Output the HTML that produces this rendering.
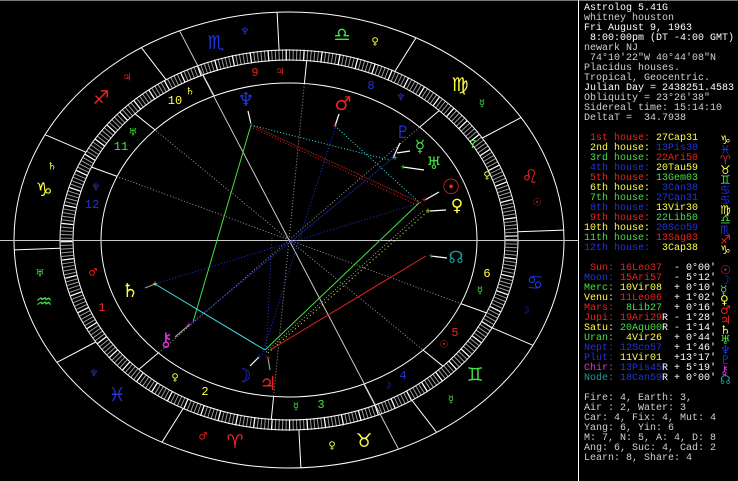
<!DOCTYPE html>
<html><head><meta charset="utf-8"><style>
html,body{margin:0;padding:0;background:#000;width:738px;height:481px;overflow:hidden}
svg{position:absolute;left:0;top:0}
.g{font-family:"DejaVu Sans",sans-serif;text-anchor:middle;dominant-baseline:central}
#p{position:absolute;left:584px;top:4px;font-family:"Liberation Mono",monospace;font-size:10px;line-height:10px;white-space:pre;color:#fff}
.w{color:#fff}.l{color:#d0d0d0}.r{color:#ee2222}.y{color:#ffff44}.gr{color:#44e044}.b{color:#2233dd}.m{color:#e030e0}.t{color:#209a9a}
.gl{position:absolute;font-family:"DejaVu Sans",sans-serif;font-size:12px;line-height:10px}
</style></head><body>
<svg width="738" height="481" viewBox="0 0 738 481">
<rect x="0" y="0" width="738" height="481" fill="#000"/>
<line x1="0" y1="0.5" x2="738" y2="0.5" stroke="#777"/>
<line x1="578.5" y1="0" x2="578.5" y2="481" stroke="#fff"/>
<!-- tick band -->
<ellipse cx="289" cy="240" rx="222.5" ry="185" fill="none" stroke="#9a9a9a" stroke-width="11.5" stroke-dasharray="1 2.55"/>
<ellipse cx="289" cy="240" rx="222.5" ry="185" fill="none" stroke="#fff" stroke-width="11.5" stroke-dasharray="1.2 16.55"/>
<g fill="none" stroke="#fff" stroke-width="1">
<ellipse cx="289" cy="240" rx="275" ry="228"/>
<ellipse cx="289" cy="240" rx="229" ry="190"/>
<ellipse cx="289" cy="240" rx="216" ry="180"/>
<ellipse cx="289" cy="240" rx="188" ry="157"/>
<line x1="158.3" y1="352.9" x2="138.9" y2="369.4"/>
<line x1="273.6" y1="396.5" x2="271.3" y2="419.4"/>
<line x1="423" y1="350" x2="443" y2="366.2"/>
<line x1="460.8" y1="303.6" x2="486.4" y2="312.9"/>
<line x1="419.7" y1="127.1" x2="439.1" y2="110.6"/>
<line x1="304.4" y1="83.5" x2="306.7" y2="60.6"/>
<line x1="155" y1="129.9" x2="135" y2="113.8"/>
<line x1="117.2" y1="176.4" x2="91.6" y2="167.1"/>
<line x1="363.8" y1="384" x2="375" y2="405.1"/>
<line x1="214.2" y1="96" x2="203" y2="74.9"/>
<line x1="183.2" y1="408.5" x2="162" y2="442.2"/>
<line x1="298.9" y1="429.8" x2="300.9" y2="467.8"/>
<line x1="412" y1="400.4" x2="436.7" y2="432.4"/>
<line x1="492.1" y1="327.8" x2="532.9" y2="345.3"/>
<line x1="517.8" y1="231.8" x2="563.7" y2="230.1"/>
<line x1="482.3" y1="138" x2="521.1" y2="117.6"/>
<line x1="394.8" y1="71.5" x2="416" y2="37.8"/>
<line x1="279.1" y1="50.2" x2="277.1" y2="12.2"/>
<line x1="166" y1="79.6" x2="141.3" y2="47.6"/>
<line x1="85.9" y1="152.2" x2="45.1" y2="134.7"/>
<line x1="60.2" y1="248.2" x2="14.3" y2="249.9"/>
<line x1="95.7" y1="342" x2="56.9" y2="362.4"/>
</g>
<line x1="0" y1="240.5" x2="578" y2="240.5" stroke="#c8c8c8"/>
<line x1="179.6" y1="31" x2="398.4" y2="449" stroke="#c8c8c8"/>
<g stroke="#999" stroke-dasharray="1 2">
<line x1="289" y1="240" x2="158.3" y2="352.9"/>
<line x1="289" y1="240" x2="273.6" y2="396.5"/>
<line x1="289" y1="240" x2="423" y2="350"/>
<line x1="289" y1="240" x2="460.8" y2="303.6"/>
<line x1="289" y1="240" x2="419.7" y2="127.1"/>
<line x1="289" y1="240" x2="304.4" y2="83.5"/>
<line x1="289" y1="240" x2="155" y2="129.9"/>
<line x1="289" y1="240" x2="117.2" y2="176.4"/>
</g>
<g stroke-width="1">
<line x1="251" y1="125" x2="421" y2="203" stroke="#dd2222" stroke-dasharray="1 1"/>
<line x1="253" y1="128" x2="419" y2="206" stroke="#dd2222" stroke-dasharray="1 2"/>
<line x1="251" y1="125" x2="389" y2="160" stroke="#40e0e0" stroke-dasharray="1 2"/>
<line x1="251" y1="125" x2="193" y2="322" stroke="#44e044"/>
<line x1="335" y1="126" x2="420" y2="203" stroke="#40e0e0" stroke-dasharray="1 2"/>
<line x1="335" y1="128" x2="262" y2="355" stroke="#2233dd" stroke-dasharray="1 2"/>
<line x1="393" y1="158" x2="189" y2="325" stroke="#2233dd" stroke-dasharray="1 1"/>
<line x1="155" y1="284" x2="419" y2="203" stroke="#2233dd" stroke-dasharray="1 2"/>
<line x1="155" y1="284" x2="265" y2="350" stroke="#40e0e0"/>
<line x1="265" y1="350" x2="419" y2="203" stroke="#44e044"/>
<line x1="266" y1="352" x2="424" y2="210" stroke="#44e044" stroke-dasharray="1 2"/>
<line x1="268" y1="353" x2="427" y2="212" stroke="#ffff44" stroke-dasharray="1 3"/>
<line x1="270" y1="350" x2="426" y2="256" stroke="#dd2222"/>
<line x1="266" y1="356" x2="272" y2="236" stroke="#2233dd" stroke-dasharray="1 2"/>
</g>
<g stroke="#fff" stroke-width="1.2">
<line x1="251" y1="124" x2="248" y2="111"/>
<line x1="335" y1="126" x2="339" y2="114"/>
<line x1="393" y1="158" x2="400" y2="143"/><line x1="397" y1="153" x2="410" y2="151"/>
<line x1="403" y1="167" x2="424" y2="170"/>
<line x1="425" y1="200" x2="439" y2="192"/>
<line x1="430" y1="211" x2="446" y2="210"/>
<line x1="431" y1="256" x2="447" y2="258"/>
<line x1="155" y1="284" x2="145" y2="288" stroke="#999"/>
<line x1="189" y1="325" x2="175" y2="337" stroke="#999"/>
<line x1="259" y1="357" x2="250" y2="366"/>
<line x1="268" y1="358" x2="270" y2="370" stroke="#999"/>
</g>
<g font-size="7" class="g">
<text x="251" y="124" fill="#2233dd">+</text>
<text x="335" y="126" fill="#ee2222">+</text>
<text x="393" y="158" fill="#2233dd">+</text>
<text x="395" y="158" fill="#44e044">+</text>
<text x="403" y="167" fill="#44e044">+</text>
<text x="424" y="200" fill="#ee2222">+</text>
<text x="428" y="211" fill="#ffff44">+</text>
<text x="431" y="256" fill="#209a9a">+</text>
<text x="155" y="284" fill="#ffff44">+</text>
<text x="189" y="325" fill="#e030e0">+</text>
<text x="259" y="357" fill="#2233dd">+</text>
<text x="268" y="358" fill="#ee2222">+</text>
</g>
<g class="g" font-size="19">
<text x="246" y="100" fill="#2233dd">♆</text>
<text x="343" y="104" fill="#ee2222">♂</text>
<text x="403" y="133" fill="#2233dd" font-size="17">♇</text>
<text x="420" y="147" fill="#44e044" font-size="17">☿</text>
<text x="434" y="164" fill="#44e044" font-size="17">♅</text>
<text x="451" y="187" fill="#ee2222" font-size="21">☉</text>
<text x="457" y="206" fill="#ffff44" font-size="17">♀</text>
<text x="456" y="258" fill="#209a9a" font-size="17">☊</text>
<text x="130" y="291" fill="#ffff44">♄</text>
<text x="166" y="340" fill="#e030e0">⚷</text>
<text x="243" y="376" fill="#2233dd">☽</text>
<text x="268" y="384" fill="#ee2222">♃</text>
</g>
<g class="g" font-size="19">
<text x="44" y="190" fill="#ffff44">♑</text>
<text x="44" y="302" fill="#44e044">♒</text>
<text x="117" y="395" fill="#2233dd">♓</text>
<text x="235" y="442" fill="#ee2222">♈</text>
<text x="364" y="441" fill="#ffff44">♉</text>
<text x="475" y="375" fill="#44e044">♊</text>
<text x="535" y="283" fill="#2233dd">♋</text>
<text x="530" y="177" fill="#ee2222">♌</text>
<text x="460" y="85" fill="#ffff44">♍</text>
<text x="342" y="35" fill="#44e044">♎</text>
<text x="216" y="43" fill="#2233dd">♏</text>
<text x="101" y="98" fill="#ee2222">♐</text>
</g>
<g class="g" font-size="10">
<text x="52" y="167" fill="#ffff44">♄</text>
<text x="40" y="274" fill="#44e044">♅</text>
<text x="94" y="374" fill="#2233dd">♆</text>
<text x="203" y="437" fill="#ee2222">♂</text>
<text x="332" y="446" fill="#ffff44">♀</text>
<text x="451" y="400" fill="#44e044">☿</text>
<text x="525" y="311" fill="#2233dd">☽</text>
<text x="537" y="203" fill="#ee2222">☉</text>
<text x="482" y="104" fill="#44e044">☿</text>
<text x="375" y="42" fill="#ffff44">♀</text>
<text x="245" y="32" fill="#2233dd">♆</text>
<text x="127" y="78" fill="#ee2222">♃</text>
<text x="93" y="273" fill="#ee2222">♂</text>
<text x="175" y="378" fill="#ffff44">♀</text>
<text x="296" y="407" fill="#44e044">☿</text>
<text x="387" y="386" fill="#2233dd">☽</text>
<text x="444" y="345" fill="#ee2222">☉</text>
<text x="480" y="291" fill="#44e044">☿</text>
<text x="487" y="176" fill="#ffff44">♀</text>
<text x="401" y="98" fill="#2233dd">♆</text>
<text x="280" y="72" fill="#ee2222">♃</text>
<text x="190" y="92" fill="#ffff44">♄</text>
<text x="133" y="133" fill="#44e044">♅</text>
<text x="96" y="188" fill="#2233dd">♆</text>
</g>
<g font-family="Liberation Mono,monospace" font-size="12" text-anchor="middle" dominant-baseline="central">
<text x="102" y="308" fill="#ee2222">1</text>
<text x="205" y="392" fill="#ffff44">2</text>
<text x="321" y="405" fill="#44e044">3</text>
<text x="403" y="376" fill="#2233dd">4</text>
<text x="455" y="333" fill="#ee2222">5</text>
<text x="487" y="274" fill="#ffff44">6</text>
<text x="473" y="145" fill="#44e044">7</text>
<text x="371" y="86" fill="#2233dd">8</text>
<text x="255" y="73" fill="#ee2222">9</text>
<text x="175" y="101" fill="#ffff44">10</text>
<text x="121" y="147" fill="#44e044">11</text>
<text x="92" y="205" fill="#2233dd">12</text>
</g>
</svg>
<div id="p"><span class="w">Astrolog 5.41G</span>
<span class="l">whitney houston</span>
<span class="w">Fri August 9, 1963</span>
<span class="w"> 8:00:00pm (DT -4:00 GMT)</span>
<span class="l">newark NJ</span>
<span class="l"> 74°10'22"W 40°44'08"N</span>
<span class="l">Placidus houses.</span>
<span class="l">Tropical, Geocentric.</span>
<span class="w">Julian Day = 2438251.4583</span>
<span class="l">Obliquity = 23°26'38"</span>
<span class="l">Sidereal time: 15:14:10</span>
<span class="l">DeltaT =  34.7938</span>

<span class="r"> 1st house:</span> <span class="y">27Cap31</span>
<span class="y"> 2nd house:</span> <span class="b">13Pis30</span>
<span class="gr"> 3rd house:</span> <span class="r">22Ari50</span>
<span class="b"> 4th house:</span> <span class="y">20Tau59</span>
<span class="r"> 5th house:</span> <span class="gr">13Gem03</span>
<span class="y"> 6th house:</span> <span class="b"> 3Can38</span>
<span class="gr"> 7th house:</span> <span class="b">27Can31</span>
<span class="b"> 8th house:</span> <span class="y">13Vir30</span>
<span class="r"> 9th house:</span> <span class="gr">22Lib50</span>
<span class="y">10th house:</span> <span class="b">20Sco59</span>
<span class="gr">11th house:</span> <span class="r">13Sag03</span>
<span class="b">12th house:</span> <span class="y"> 3Cap38</span>

<span class="r"> Sun:</span> <span class="r">16Leo37</span>  - 0°00'
<span class="b">Moon:</span> <span class="r">15Ari57</span>  - 5°12'
<span class="gr">Merc:</span> <span class="y">10Vir08</span>  + 0°10'
<span class="y">Venu:</span> <span class="r">11Leo06</span>  + 1°02'
<span class="r">Mars:</span> <span class="gr"> 8Lib27</span>  + 0°16'
<span class="r">Jupi:</span> <span class="r">19Ari29</span>R - 1°28'
<span class="y">Satu:</span> <span class="gr">20Aqu00</span>R - 1°14'
<span class="gr">Uran:</span> <span class="y"> 4Vir26</span>  + 0°44'
<span class="b">Nept:</span> <span class="b">12Sco57</span>  + 1°46'
<span class="b">Plut:</span> <span class="y">11Vir01</span>  +13°17'
<span class="m">Chir:</span> <span class="b">13Pis45</span>R + 5°19'
<span class="t">Node:</span> <span class="b">18Can59</span>R + 0°00'

<span class="l">Fire: 4, Earth: 3,
Air : 2, Water: 3
Car: 4, Fix: 4, Mut: 4
Yang: 6, Yin: 6
M: 7, N: 5, A: 4, D: 8
Ang: 6, Suc: 4, Cad: 2
Learn: 8, Share: 4</span></div>
<div class="gl y" style="left:720px;top:135px">♑</div>
<div class="gl b" style="left:720px;top:145px">♓</div>
<div class="gl r" style="left:720px;top:155px">♈</div>
<div class="gl y" style="left:720px;top:165px">♉</div>
<div class="gl gr" style="left:720px;top:175px">♊</div>
<div class="gl b" style="left:720px;top:185px">♋</div>
<div class="gl b" style="left:720px;top:195px">♋</div>
<div class="gl y" style="left:720px;top:205px">♍</div>
<div class="gl gr" style="left:720px;top:215px">♎</div>
<div class="gl b" style="left:720px;top:225px">♏</div>
<div class="gl r" style="left:720px;top:235px">♐</div>
<div class="gl y" style="left:720px;top:245px">♑</div>
<div class="gl r" style="left:720px;top:265px">☉</div>
<div class="gl b" style="left:720px;top:275px">☽</div>
<div class="gl gr" style="left:720px;top:285px">☿</div>
<div class="gl y" style="left:720px;top:295px">♀</div>
<div class="gl r" style="left:720px;top:305px">♂</div>
<div class="gl r" style="left:720px;top:315px">♃</div>
<div class="gl y" style="left:720px;top:325px">♄</div>
<div class="gl gr" style="left:720px;top:335px">♅</div>
<div class="gl b" style="left:720px;top:345px">♆</div>
<div class="gl b" style="left:720px;top:355px">♇</div>
<div class="gl m" style="left:720px;top:365px">⚷</div>
<div class="gl t" style="left:720px;top:375px">☊</div>
</body></html>
